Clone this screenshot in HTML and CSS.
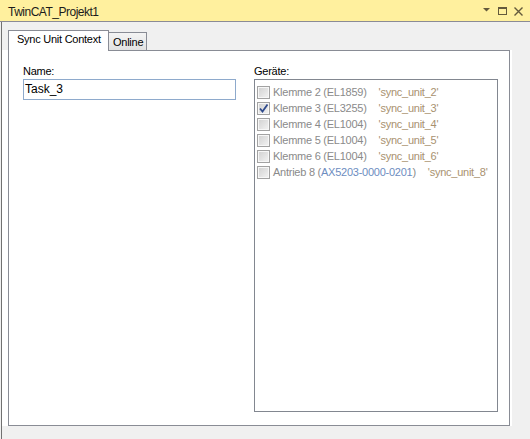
FILE: index.html
```html
<!DOCTYPE html>
<html lang="de">
<head>
<meta charset="utf-8">
<title>TwinCAT_Projekt1</title>
<link rel="stylesheet" href="styles.css">
</head>
<body>
<div class="window">
  <div class="titlebar">
    <span class="title">TwinCAT_Projekt1</span>
    <svg class="tools" width="47" height="21" viewBox="0 0 47 21">
      <polygon points="4,8 11,8 7.5,11.5" fill="#645a3c"/>
      <rect x="19.5" y="7.5" width="8" height="7" fill="none" stroke="#645a3c" stroke-width="1"/>
      <rect x="19" y="7" width="9" height="2" fill="#645a3c"/>
      <path d="M35.5 7.5 L43.5 15.5 M43.5 7.5 L35.5 15.5" stroke="#645a3c" stroke-width="1.4" fill="none"/>
    </svg>
  </div>
  <div class="main">
    <div class="tabs">
      <div class="tab active">Sync Unit Context</div>
      <div class="tab online">Online</div>
    </div>
    <div class="pagewrap">
      <div class="panel">
        <div class="field">
          <div class="label">Name:</div>
          <div class="input">Task_3</div>
        </div>
        <div class="field">
          <div class="label">Geräte:</div>
          <div class="list">
            <div class="row"><span class="cb"></span><span class="name">Klemme 2 (EL1859)</span><span class="sync">'sync_unit_2'</span></div>
            <div class="row"><span class="cb checked"><svg width="11" height="11" viewBox="0 0 11 11"><path d="M2 5.5 L4.5 8.5 L9.5 1.5" fill="none" stroke="#2f4a8c" stroke-width="1.8"/></svg></span><span class="name">Klemme 3 (EL3255)</span><span class="sync">'sync_unit_3'</span></div>
            <div class="row"><span class="cb"></span><span class="name">Klemme 4 (EL1004)</span><span class="sync">'sync_unit_4'</span></div>
            <div class="row"><span class="cb"></span><span class="name">Klemme 5 (EL1004)</span><span class="sync">'sync_unit_5'</span></div>
            <div class="row"><span class="cb"></span><span class="name">Klemme 6 (EL1004)</span><span class="sync">'sync_unit_6'</span></div>
            <div class="row"><span class="cb"></span><span class="name">Antrieb 8 (<span class="blue">AX5203-0000-0201</span>)</span><span class="sync">'sync_unit_8'</span></div>
          </div>
        </div>
      </div>
    </div>
  </div>
</div>
</body>
</html>
```
FILE: styles.css
```css
html, body {
  margin: 0;
  padding: 0;
}
body {
  width: 530px;
  height: 439px;
  overflow: hidden;
  background: #f0f0f0;
  font-family: "Liberation Sans", Arial, sans-serif;
  color: #000;
}
.window {
  width: 530px;
  height: 439px;
}
.titlebar {
  height: 21px;
  background: #fff09e;
  border-bottom: 1px solid #8b8b96;
  display: flex;
  align-items: flex-start;
}
.title {
  font-size: 12px;
  line-height: 14px;
  padding: 5px 0 0 8px;
  letter-spacing: -0.5px;
  color: #1b1b1b;
}
.tools {
  margin-left: auto;
  margin-right: 4px;
  display: block;
}
.main {
  margin-left: 1px;
  border-left: 1px solid #717171;
  height: 417px;
}
.tabs {
  display: flex;
  align-items: flex-end;
  height: 20px;
  padding: 8px 0 0 6px;
}
.tab {
  box-sizing: border-box;
  border: 1px solid #898c95;
  border-bottom: none;
  font-size: 11px;
  line-height: 13px;
  letter-spacing: -0.25px;
  white-space: nowrap;
}
.tab.active {
  width: 101px;
  height: 21px;
  margin-bottom: -1px;
  padding: 2px 0 0 8px;
  background: #fff;
  position: relative;
  z-index: 1;
}
.tab.online {
  width: 39px;
  height: 18px;
  margin-left: -1px;
  padding: 3px 0 0 4px;
  background: linear-gradient(#f4f4f4, #e2e2e2);
}
.pagewrap {
  box-sizing: border-box;
  width: 510px;
  height: 376px;
  padding-left: 6px;
  background: #fff;
}
.panel {
  box-sizing: border-box;
  width: 502px;
  height: 376px;
  border: 1px solid #898c95;
  background: #fff;
  display: grid;
  grid-template-columns: 213px 244px;
  column-gap: 18px;
  align-content: start;
  padding: 14px 0 0 14px;
}
.label {
  font-size: 11px;
  line-height: 13px;
  letter-spacing: -0.25px;
  margin-bottom: 1px;
}
.input {
  box-sizing: border-box;
  height: 21px;
  border: 1px solid #8eaacc;
  font-size: 12px;
  line-height: 19px;
  padding-left: 1px;
}
.list {
  box-sizing: border-box;
  height: 333px;
  border: 1px solid #828790;
  padding: 4px 0 0 2px;
}
.row {
  display: flex;
  align-items: flex-start;
  height: 16px;
  font-size: 11px;
  line-height: 16px;
  letter-spacing: -0.25px;
  white-space: nowrap;
}
.cb {
  box-sizing: border-box;
  width: 13px;
  height: 13px;
  margin: 2px 3px 0 0;
  border: 1px solid #a2a2a2;
  background: linear-gradient(135deg, #d0d0d0, #f4f4f4);
  box-shadow: inset 0 0 0 1px #f7f7f7;
  flex: none;
  display: block;
}
.cb svg {
  display: block;
}
.name {
  color: #8a8a8a;
}
.blue {
  color: #6d8dbf;
}
.sync {
  color: #a8916f;
  margin-left: 12px;
}
```
